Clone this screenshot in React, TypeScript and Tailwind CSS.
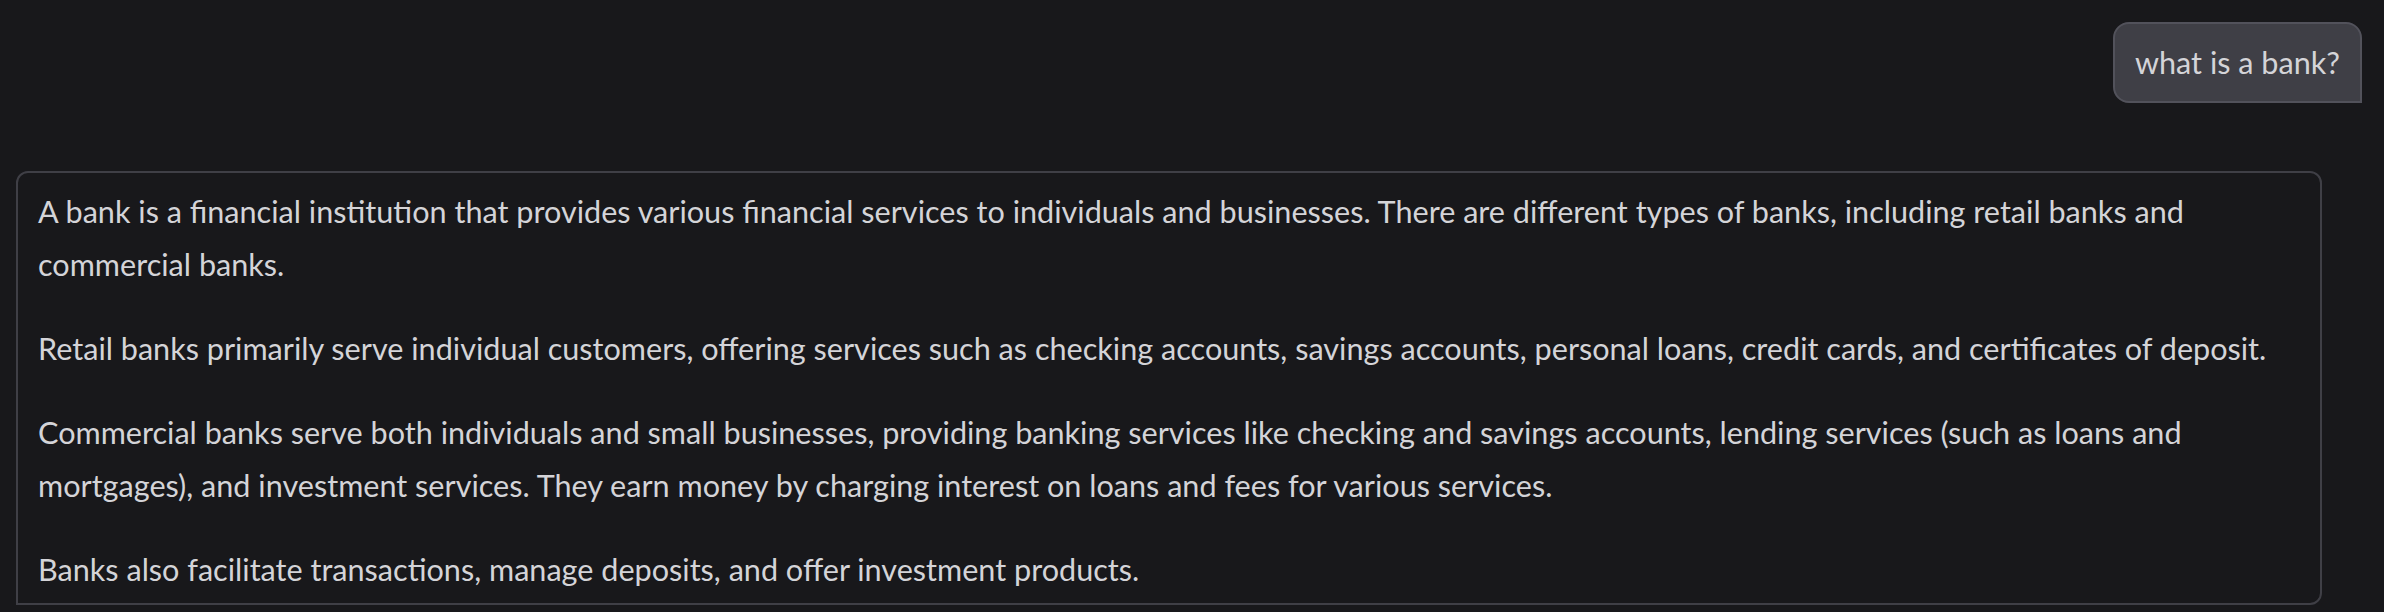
export default function App() {
  return (
    <div className="min-h-[612px] w-full bg-[#18181b] font-['Lato',sans-serif] text-[#d4d4d8]">
      <div className="flex flex-col px-4 pt-[22px]">
        <div className="flex justify-end pr-[6px]">
          <div className="rounded-2xl rounded-br-none border-2 border-[#52525b] bg-[#3f3f46] px-5 py-[12px] text-[30.6px] leading-[53px]">
            what is a bank?
          </div>
        </div>

        <div className="mt-[68px] w-[2306px] rounded-xl rounded-bl-none border-2 border-[#3f3f46] px-5 pt-[12px] pb-[7px] text-[30.6px] leading-[53px]">
          <p>
            A bank is a financial institution that provides various financial services to individuals and
            businesses. There are different types of banks, including retail banks and commercial banks.
          </p>
          <p className="mt-[31px]">
            Retail banks primarily serve individual customers, offering services such as checking accounts,
            savings accounts, personal loans, credit cards, and certificates of deposit.
          </p>
          <p className="mt-[31px]">
            Commercial banks serve both individuals and small businesses, providing banking services like
            checking and savings accounts, lending services (such as loans and mortgages), and investment
            services. They earn money by charging interest on loans and fees for various services.
          </p>
          <p className="mt-[31px]">Banks also facilitate transactions, manage deposits, and offer investment products.</p>
        </div>
      </div>
    </div>
  );
}
